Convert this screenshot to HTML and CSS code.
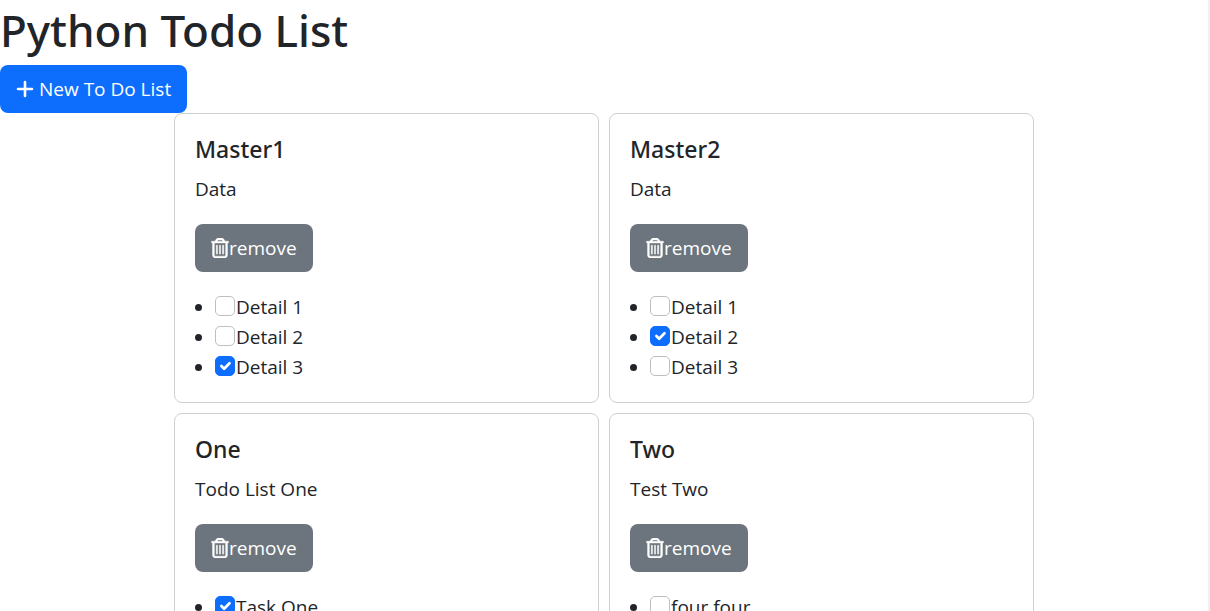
FILE: index.html
```html
<!DOCTYPE html>
<html lang="en">
<head>
<meta charset="utf-8">
<meta name="viewport" content="width=device-width, initial-scale=1">
<title>Python Todo List</title>
<link rel="stylesheet" href="styles.css">
</head>
<body>
<svg class="sprite" aria-hidden="true">
  <symbol id="trash" viewBox="0 0 448 512"><path d="M170.500 51.600L151.500 80h145l-19-28.400c-1.500-2.200-4-3.600-6.700-3.600H177.100c-2.700 0-5.200 1.300-6.700 3.600zm147-26.600L354.200 80H368h48 8c13.300 0 24 10.700 24 24s-10.700 24-24 24h-8V432c0 44.200-35.800 80-80 80H112c-44.200 0-80-35.800-80-80V128H24c-13.300 0-24-10.700-24-24S10.700 80 24 80h8H80 93.800l36.700-55.100C140.900 9.400 158.400 0 177.100 0h93.700c18.700 0 36.200 9.400 46.600 24.900zM80 128V432c0 17.700 14.300 32 32 32H336c17.700 0 32-14.300 32-32V128H80zm80 64V400c0 8.800-7.200 16-16 16s-16-7.200-16-16V192c0-8.800 7.200-16 16-16s16 7.200 16 16zm80 0V400c0 8.800-7.200 16-16 16s-16-7.200-16-16V192c0-8.800 7.200-16 16-16s16 7.200 16 16zm80 0V400c0 8.800-7.200 16-16 16s-16-7.200-16-16V192c0-8.800 7.200-16 16-16s16 7.200 16 16z"/></symbol>
</svg>
<main class="page">
  <h1 class="page-title">Python Todo List</h1>
  <button class="btn btn-primary" type="button"><svg class="icon-plus" viewBox="0 0 18 18" aria-hidden="true"><path d="M9 2v14M2 9h14"/></svg>New To Do List</button>
  <div class="grid">
    <section class="card">
      <h2 class="card-title">Master1</h2>
      <p class="card-text">Data</p>
      <button class="btn btn-secondary" type="button"><svg class="icon-trash" aria-hidden="true"><use href="#trash"/></svg>remove</button>
      <ul class="tasks">
        <li><label><input class="check" type="checkbox">Detail 1</label></li>
        <li><label><input class="check" type="checkbox">Detail 2</label></li>
        <li><label><input class="check" type="checkbox" checked>Detail 3</label></li>
      </ul>
    </section>
    <section class="card">
      <h2 class="card-title">Master2</h2>
      <p class="card-text">Data</p>
      <button class="btn btn-secondary" type="button"><svg class="icon-trash" aria-hidden="true"><use href="#trash"/></svg>remove</button>
      <ul class="tasks">
        <li><label><input class="check" type="checkbox">Detail 1</label></li>
        <li><label><input class="check" type="checkbox" checked>Detail 2</label></li>
        <li><label><input class="check" type="checkbox">Detail 3</label></li>
      </ul>
    </section>
    <section class="card">
      <h2 class="card-title">One</h2>
      <p class="card-text">Todo List One</p>
      <button class="btn btn-secondary" type="button"><svg class="icon-trash" aria-hidden="true"><use href="#trash"/></svg>remove</button>
      <ul class="tasks">
        <li><label><input class="check" type="checkbox" checked>Task One</label></li>
      </ul>
    </section>
    <section class="card">
      <h2 class="card-title">Two</h2>
      <p class="card-text">Test Two</p>
      <button class="btn btn-secondary" type="button"><svg class="icon-trash" aria-hidden="true"><use href="#trash"/></svg>remove</button>
      <ul class="tasks">
        <li><label><input class="check" type="checkbox">four four</label></li>
      </ul>
    </section>
  </div>
</main>
</body>
</html>
```
FILE: styles.css
```css
*, *::before, *::after { box-sizing: border-box; }

body {
  margin: 0;
  background: #fff;
  color: #212529;
  font-family: "Segoe UI", "Open Sans", "Noto Sans", sans-serif;
  font-size: 19px;
  line-height: 30px;
}

.sprite { display: none; }

.page {
  height: 100vh;
  overflow: hidden;
  border-right: 2px solid #f1f1f1;
}

.page-title {
  margin: 0 0 5px;
  font-family: "Segoe UI", "Noto Sans", sans-serif;
  font-size: 44px;
  font-weight: 500;
  line-height: 60px;
}

.btn {
  display: flex;
  align-items: center;
  padding: 9px 16px;
  border: 0;
  border-radius: 8px;
  color: #fff;
  font: inherit;
  cursor: pointer;
}

.btn-primary { background: #0d6efd; }
.btn-secondary { background: #6c757d; }

.icon-plus {
  width: 18px;
  height: 18px;
  margin-right: 5px;
  fill: none;
  stroke: currentColor;
  stroke-width: 2.6;
  stroke-linecap: round;
}

.icon-trash {
  width: 18px;
  height: 20px;
  fill: currentColor;
  stroke: currentColor;
  stroke-width: 10;
}

.grid {
  display: grid;
  grid-template-columns: repeat(2, minmax(0, 1fr));
  gap: 10px;
  max-width: 860px;
  margin: 0 auto;
}

.card {
  padding: 20px;
  border: 1px solid #d0d0d0;
  border-radius: 8px;
  background: #fff;
}

.card-title {
  margin: 0 0 10px;
  font-family: "Segoe UI", "Noto Sans", sans-serif;
  font-size: 23px;
  font-weight: 500;
  line-height: 30px;
}

.card-text { margin: 0 0 20px; }

.tasks {
  margin: 20px 0 0;
  padding-left: 20px;
}

.check {
  appearance: none;
  width: 20px;
  height: 20px;
  margin: 4px 1px 0 0;
  border: 1px solid #bfbfbf;
  border-radius: 5px;
  background: #fff center / contain no-repeat;
  vertical-align: top;
}

.check:checked {
  border-color: #0d6efd;
  background-color: #0d6efd;
  background-image: url("data:image/svg+xml,%3Csvg xmlns='http://www.w3.org/2000/svg' viewBox='0 0 20 20'%3E%3Cpath fill='none' stroke='%23fff' stroke-linecap='round' stroke-linejoin='round' stroke-width='3' d='m6 10 3 3 6-6'/%3E%3C/svg%3E");
}
```
